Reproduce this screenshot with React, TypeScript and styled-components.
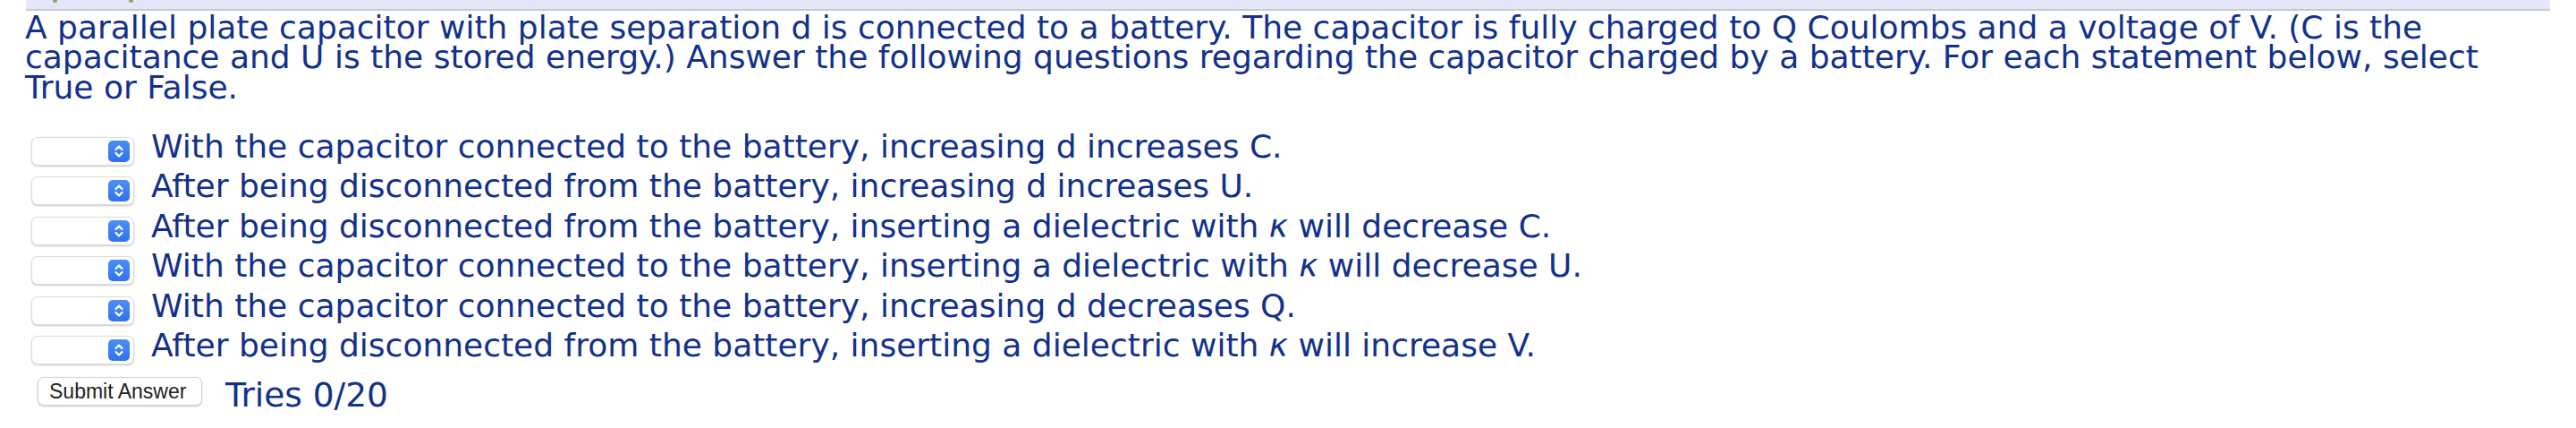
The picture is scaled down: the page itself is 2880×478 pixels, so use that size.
import React from "react";
import styled, { createGlobalStyle } from "styled-components";

const Global = createGlobalStyle`
  html, body { margin: 0; padding: 0; background: #ffffff; }
  body { width: 2880px; height: 478px; overflow: hidden; }
`;

const Page = styled.div`
  padding-left: 28px;
  font-family: "DejaVu Sans", Verdana, sans-serif;
  color: #12318c;
`;

const TopBand = styled.div`
  margin-left: 1px;
  width: 2792px;
  height: 10px;
  background: #e6e6fa;
  border-bottom: 2px solid #c9c9c9;
  display: flex;
  align-items: flex-start;
  gap: 80px;
  padding-left: 30px;
  box-sizing: content-box;
`;

const Leaf = styled.span`
  display: block;
  width: 5px;
  height: 3px;
  background: #7fae6a;
  border-radius: 0 0 3px 3px;
`;

const Question = styled.p`
  margin: 1.8px 0 0 0;
  font-size: 36px;
  line-height: 33.5px;
  white-space: nowrap;
`;

const Statements = styled.div`
  margin-top: 27.6px;
  display: flex;
  flex-direction: column;
`;

const Row = styled.div`
  display: flex;
  align-items: flex-start;
  height: 44.5px;
`;

const SelectBox = styled.div`
  margin: 11px 0 0 7px;
  width: 115px;
  height: 32px;
  box-sizing: border-box;
  background: #ffffff;
  border: 1px solid #dcdcdc;
  border-radius: 7px;
  box-shadow: 0 1px 2px rgba(0, 0, 0, 0.22);
  display: flex;
  align-items: center;
  justify-content: flex-end;
  padding-right: 4px;
  flex-shrink: 0;
`;

const Stepper = styled.span`
  width: 24px;
  height: 24px;
  border-radius: 5px;
  background: linear-gradient(#4a8ff8, #2f73ee);
  display: flex;
  align-items: center;
  justify-content: center;
`;

const Statement = styled.span`
  margin-left: 19px;
  font-size: 36px;
  line-height: 44.5px;
  white-space: nowrap;
`;

const Kappa = styled.i`
  font-style: italic;
`;

const SubmitRow = styled.div`
  margin-top: 12.4px;
  display: flex;
  align-items: flex-start;
`;

const SubmitButton = styled.button`
  margin-left: 14px;
  width: 184px;
  height: 32px;
  box-sizing: border-box;
  padding: 0 0 0 12px;
  text-align: left;
  background: #ffffff;
  border: 1px solid #d2d2d2;
  border-radius: 7px;
  box-shadow: 0 1px 2px rgba(0, 0, 0, 0.22);
  font-family: "Liberation Sans", Arial, sans-serif;
  font-size: 23px;
  color: #222222;
  line-height: 30px;
`;

const Tries = styled.span`
  margin-left: 26px;
  font-size: 37.5px;
  line-height: 40px;
`;

const Chevrons = () => (
  <svg width="14" height="18" viewBox="0 0 14 18" fill="none">
    <path d="M3.5 7 L7 3.5 L10.5 7" stroke="#ffffff" strokeWidth="2.2" strokeLinecap="round" strokeLinejoin="round" />
    <path d="M3.5 11 L7 14.5 L10.5 11" stroke="#ffffff" strokeWidth="2.2" strokeLinecap="round" strokeLinejoin="round" />
  </svg>
);

const statements: React.ReactNode[] = [
  "With the capacitor connected to the battery, increasing d increases C.",
  "After being disconnected from the battery, increasing d increases U.",
  <>After being disconnected from the battery, inserting a dielectric with <Kappa>κ</Kappa> will decrease C.</>,
  <>With the capacitor connected to the battery, inserting a dielectric with <Kappa>κ</Kappa> will decrease U.</>,
  "With the capacitor connected to the battery, increasing d decreases Q.",
  <>After being disconnected from the battery, inserting a dielectric with <Kappa>κ</Kappa> will increase V.</>,
];

export default function App() {
  return (
    <>
      <Global />
      <Page>
        <TopBand>
          <Leaf />
          <Leaf />
        </TopBand>
        <Question>
          A parallel plate capacitor with plate separation d is connected to a battery. The capacitor is fully charged to Q Coulombs and a voltage of V. (C is the
          <br />
          capacitance and U is the stored energy.) Answer the following questions regarding the capacitor charged by a battery. For each statement below, select
          <br />
          True or False.
        </Question>
        <Statements>
          {statements.map((s, i) => (
            <Row key={i}>
              <SelectBox>
                <Stepper>
                  <Chevrons />
                </Stepper>
              </SelectBox>
              <Statement>{s}</Statement>
            </Row>
          ))}
        </Statements>
        <SubmitRow>
          <SubmitButton type="button">Submit Answer</SubmitButton>
          <Tries>Tries 0/20</Tries>
        </SubmitRow>
      </Page>
    </>
  );
}
